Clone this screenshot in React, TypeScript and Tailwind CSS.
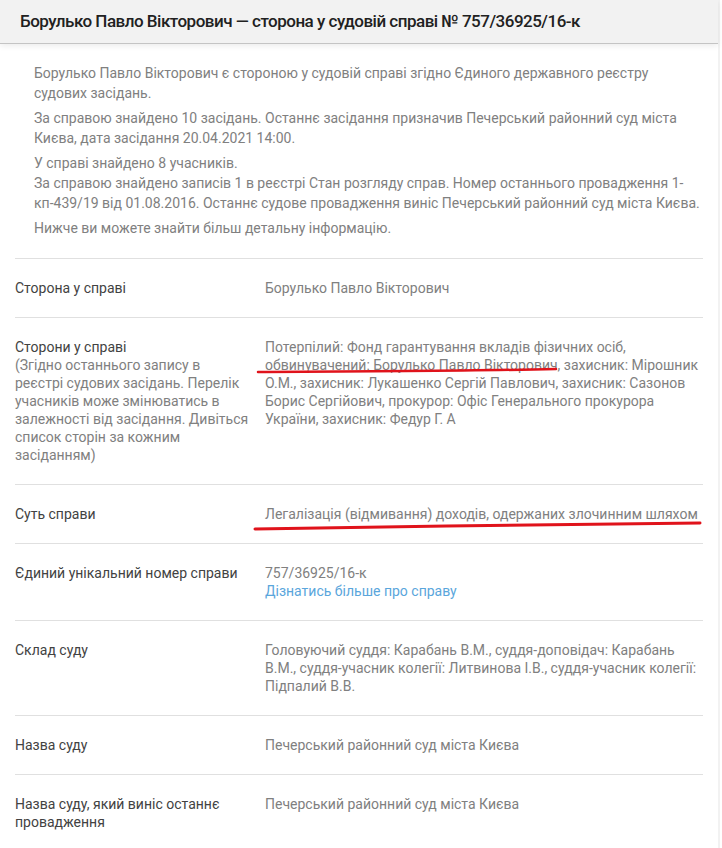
import React from "react";

interface Row { label: React.ReactNode; value: React.ReactNode }

const ROWS: Row[] = [
  { label: "Сторона у справі", value: "Борулько Павло Вікторович" },
  {
    label: (
      <>
        <span className="text-[#424242]">Сторони у справі</span>
        <br />
        <span className="text-[#808080]">
          (Згідно останнього запису в<br />реєстрі судових засідань. Перелік учасників може змінюватись в залежності від засідання. Дивіться список сторін за кожним засіданням)
        </span>
      </>
    ),
    value:
      "Потерпілий: Фонд гарантування вкладів фізичних осіб, обвинувачений: Борулько Павло Вікторович, захисник: Мірошник О.М., захисник: Лукашенко Сергій Павлович, захисник: Сазонов Борис Сергійович, прокурор: Офіс Генерального прокурора України, захисник: Федур Г. А",
  },
  { label: "Суть справи", value: "Легалізація (відмивання) доходів, одержаних злочинним шляхом" },
  {
    label: "Єдиний унікальний номер справи",
    value: (
      <>
        757/36925/16-к
        <br />
        <a className="text-[#5aa6dc]" href="#">Дізнатись більше про справу</a>
      </>
    ),
  },
  {
    label: "Склад суду",
    value:
      "Головуючий суддя: Карабань В.М., суддя-доповідач: Карабань В.М., суддя-учасник колегії: Литвинова І.В., суддя-учасник колегії: Підпалий В.В.",
  },
  { label: "Назва суду", value: "Печерський районний суд міста Києва" },
  { label: "Назва суду, який виніс останнє провадження", value: "Печерський районний суд міста Києва" },
];

export default function App() {
  return (
    <div className="relative w-[722px] min-h-[848px] bg-white font-['Roboto',sans-serif]">
      <div className="w-[720px] border-r-2 border-[#f2f2f2] min-h-[848px]">
        <header className="h-[44px] bg-[#f2f2f2] border-b border-[#c4c4c4] shadow-[0_2px_6px_rgba(0,0,0,0.08)] px-5 flex items-center">
          <h1 className="text-[17px] font-medium tracking-[-0.5px] text-[#212121]">
            Борулько Павло Вікторович — сторона у судовій справі № 757/36925/16-к
          </h1>
        </header>

        {/* Intro */}
        <div className="pl-[34px] pr-[12px] pt-[19px] pb-5 text-[14px] leading-5 text-[#808080] space-y-[5px]">
          <p className="pr-[22px]">Борулько Павло Вікторович є стороною у судовій справі згідно Єдиного державного реєстру судових засідань.</p>
          <p>За справою знайдено 10 засідань. Останнє засідання призначив Печерський районний суд міста Києва, дата засідання 20.04.2021 14:00.</p>
          <p>
            У справі знайдено 8 учасників.
            <br />
            За справою знайдено записів 1 в реєстрі Стан розгляду справ. Номер останнього провадження 1-кп-439/19 від 01.08.2016. Останнє судове провадження виніс Печерський районний суд міста Києва.
          </p>
          <p>Нижче ви можете знайти більш детальну інформацію.</p>
        </div>

        {/* Details */}
        <div className="mx-[15px] border-t border-[#e0e0e0] divide-y divide-[#e0e0e0]">
          {ROWS.map((r, i) => (
            <div key={i} className="grid grid-cols-[250px_1fr] py-5 text-[14px] leading-[18px]">
              <div className="text-[#424242] pr-[10px]">{r.label}</div>
              <div className="text-[#808080]">{r.value}</div>
            </div>
          ))}
        </div>
      </div>

      {/* red marker underlines */}
      <svg className="absolute inset-0 pointer-events-none" width="722" height="848">
        <path d="M258 372 C 360 371.5, 470 371, 556 369" stroke="#e0131b" strokeWidth="2.5" fill="none" strokeLinecap="round" />
        <path d="M255 529 C 400 527, 560 524, 700 523" stroke="#e0131b" strokeWidth="3" fill="none" strokeLinecap="round" />
      </svg>
    </div>
  );
}
